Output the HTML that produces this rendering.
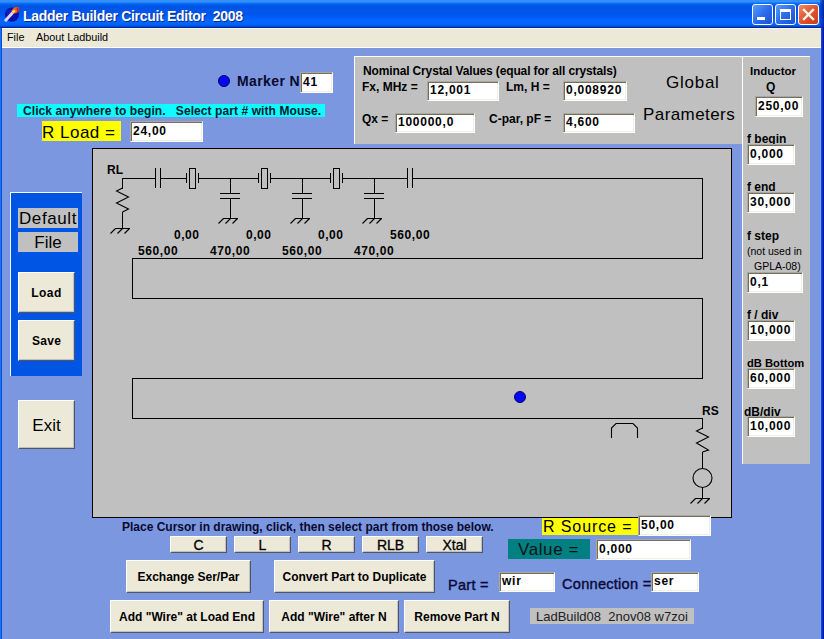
<!DOCTYPE html>
<html><head><meta charset="utf-8">
<style>
html,body{margin:0;padding:0;}
body{width:824px;height:639px;overflow:hidden;position:relative;background:#7B97DF;font-family:"Liberation Sans",sans-serif;}
div,span{position:absolute;box-sizing:border-box;white-space:nowrap;}
.t{line-height:1;}
.b{font-weight:bold;}
#title{left:0;top:0;width:824px;height:28px;background:linear-gradient(to bottom,#3A8CF8 0px,#3A8CF8 1px,#3593FF 1px,#3593FF 2px,#1A80FF 2px,#1A80FF 3px,#0870FA 3px,#0870FA 4px,#0262EE 4px,#0262EE 5px,#0058E6 5px,#0058E6 6px,#0054E3 6px,#0054E3 7px,#0054E3 7px,#0054E3 8px,#0055E8 8px,#0055E8 9px,#0055EA 9px,#0055EA 10px,#0055EB 10px,#0055EB 11px,#0055EB 11px,#0055EB 12px,#0055EB 12px,#0055EB 13px,#0056EC 13px,#0056EC 14px,#0057EE 14px,#0057EE 15px,#0058F0 15px,#0058F0 16px,#005AF3 16px,#005AF3 17px,#005DF6 17px,#005DF6 18px,#0060F9 18px,#0060F9 19px,#0064FB 19px,#0064FB 20px,#0066FD 20px,#0066FD 21px,#0067FE 21px,#0067FE 22px,#0066FD 22px,#0066FD 23px,#0064FA 23px,#0064FA 24px,#0062F6 24px,#0062F6 25px,#005CEE 25px,#005CEE 26px,#0048D0 26px,#0048D0 27px,#002A9A 27px,#002A9A 28px);}
#menu{left:2px;top:28px;width:819px;height:20px;background:#ECE9D8;border-top:1px solid #F4F4FF;border-bottom:1px solid #FFFFFF;}
#lb{left:0;top:28px;width:2px;height:611px;background:linear-gradient(to right,#1672FA 0px,#1672FA 1px,#0A50D0 1px,#0A50D0 2px);}
#rb{left:820px;top:28px;width:4px;height:611px;background:linear-gradient(to right,#76A0F8 0px,#76A0F8 1px,#1A40D0 1px,#1A40D0 2px,#0C30C0 2px,#0C30C0 3px,#0016B0 3px,#0016B0 4px);}
.tb{background:#fff;border-style:solid;border-width:1px;border-color:#ACA899 #FFFFFF #FFFFFF #ACA899;box-shadow:inset 1px 1px 0 #716F64,inset -1px -1px 0 #F1EFE2;font:bold 12px/12px "Liberation Sans",sans-serif;color:#000;padding:3px 0 0 2px;letter-spacing:0.75px;}
.btn{background:#ECE9D8;border-style:solid;border-width:1px;border-color:#FFFFFF #4E5566 #4E5566 #FFFFFF;box-shadow:inset -1px -1px 0 rgba(120,120,130,0.35);font:bold 12px/12px "Liberation Sans",sans-serif;color:#000;text-align:center;}
.btn span{position:static;}
.gp{background:#C0C0C0;border-left:1px solid #fff;border-top:1px solid #fff;}
</style></head><body>
<div id="title"></div>
<div style="left:820px;top:0;width:4px;height:28px;background:linear-gradient(to right,rgba(0,60,210,0.5),rgba(0,30,150,0.9));"></div>
<div id="lb"></div><div id="rb"></div>
<div id="menu"></div>

<!-- title icon -->
<svg style="position:absolute;left:0;top:0" width="24" height="28">
<ellipse cx="12" cy="14.6" rx="7" ry="7.2" fill="#0A10A8"/>
<ellipse cx="10" cy="13" rx="3.5" ry="3.5" fill="#1830D0" opacity="0.5"/>
<path d="M5.8 20.2 L12.6 12.8" stroke="#E0D8F0" stroke-width="2.8" stroke-linecap="round"/>
<path d="M11.5 11 Q13 7.5 16 7 Q18.5 6.6 19 8 Q19.3 11 17 12.8 Q14.5 14 12.5 13 Z" fill="#F06018"/>
<path d="M16.5 7.3 Q18.8 7.2 18.8 9 Q18.6 11.2 17.2 12 Z" fill="#E01808"/>
<path d="M11.8 11.5 Q13.5 9.5 15.5 10.5 Q15.5 12.5 13.3 13 Z" fill="#F8F070"/>
</svg>
<div class="t b" style="left:23px;top:9px;font-size:14px;letter-spacing:-0.3px;color:#fff;text-shadow:1px 1px 0 #0A2A90;">Ladder Builder Circuit Editor&nbsp; 2008</div>
<!-- window buttons -->
<div style="left:752px;top:4px;width:21px;height:21px;border:1px solid #fff;border-radius:3px;background:linear-gradient(135deg,#5A9CFF 0%,#2C6CEB 50%,#1E50D0 100%);"></div>
<div style="left:757px;top:17px;width:8px;height:3px;background:#fff;"></div>
<div style="left:775px;top:4px;width:21px;height:21px;border:1px solid #fff;border-radius:3px;background:linear-gradient(135deg,#5A9CFF 0%,#2C6CEB 50%,#1E50D0 100%);"></div>
<div style="left:780px;top:9px;width:11px;height:11px;border:1px solid #fff;border-top-width:3px;"></div>
<div style="left:798px;top:4px;width:21px;height:21px;border:1px solid #fff;border-radius:3px;background:linear-gradient(135deg,#F08C68 0%,#E0522E 50%,#C83C18 100%);"></div>
<svg style="position:absolute;left:798px;top:4px" width="21" height="21"><path d="M6 6 L15 15 M15 6 L6 15" stroke="#FFF4E8" stroke-width="2.4" stroke-linecap="square"/></svg>
<!-- menu text -->
<div class="t" style="left:7px;top:32px;font-size:10.8px;color:#000;">File</div>
<div class="t" style="left:36px;top:32px;font-size:10.8px;color:#000;">About Ladbuild</div>

<!-- marker -->
<div style="left:218px;top:75px;width:12px;height:12px;border-radius:6px;background:#0808F0;border:1px solid #000070;"></div>
<div class="t b" style="left:237px;top:74px;font-size:14px;letter-spacing:0.4px;color:#0A0A30;">Marker N</div>
<div class="tb" style="left:300px;top:72px;width:33px;height:21px;">41</div>

<div class="t b" style="left:17px;top:104px;width:308px;height:13px;background:#10FAFF;color:#002030;font-size:12px;letter-spacing:0.08px;padding:1px 0 0 6px;">Click anywhere to begin.&nbsp;&nbsp; Select part # with Mouse.</div>
<div class="t" style="left:42px;top:121px;width:79px;height:20px;background:#FFFF00;color:#000;font-size:17px;letter-spacing:0.5px;padding:3px 0 0 0;">R Load =</div>
<div class="tb" style="left:130px;top:121px;width:73px;height:21px;">24,00</div>

<!-- panel 1 -->
<div class="gp" style="left:354px;top:56px;width:388px;height:88px;"></div>
<div class="t b" style="left:363px;top:65px;font-size:12px;letter-spacing:-0.14px;color:#000;">Nominal Crystal Values (equal for all crystals)</div>
<div class="t b" style="left:362px;top:81px;font-size:12px;color:#000;">Fx, MHz =</div>
<div class="tb" style="left:427px;top:81px;width:72px;height:20px;padding-top:2px;">12,001</div>
<div class="t b" style="left:506px;top:81px;font-size:12px;color:#000;">Lm, H =</div>
<div class="tb" style="left:563px;top:81px;width:64px;height:20px;padding-top:2px;">0,008920</div>
<div class="t b" style="left:362px;top:113px;font-size:12px;color:#000;">Qx =</div>
<div class="tb" style="left:395px;top:113px;width:80px;height:20px;padding-top:2px;">100000,0</div>
<div class="t b" style="left:489px;top:113px;font-size:12px;color:#000;">C-par, pF =</div>
<div class="tb" style="left:563px;top:113px;width:72px;height:20px;padding-top:2px;">4,600</div>
<div class="t" style="left:666px;top:74px;font-size:17px;letter-spacing:0.75px;color:#000;">Global</div>
<div class="t" style="left:643px;top:106px;font-size:17px;letter-spacing:0.42px;color:#000;">Parameters</div>

<!-- panel 2 -->
<div class="gp" style="left:742px;top:56px;width:68px;height:408px;"></div>
<div class="t b" style="left:750px;top:66px;font-size:11.5px;color:#000;">Inductor</div>
<div class="t b" style="left:766px;top:81px;font-size:12px;color:#000;">Q</div>
<div class="tb" style="left:755px;top:96px;width:48px;height:21px;">250,00</div>
<div class="t b" style="left:747px;top:133px;font-size:12px;color:#000;">f begin</div>
<div class="tb" style="left:747px;top:144px;width:48px;height:21px;">0,000</div>
<div class="t b" style="left:747px;top:181px;font-size:12px;color:#000;">f end</div>
<div class="tb" style="left:747px;top:192px;width:48px;height:21px;">30,000</div>
<div class="t b" style="left:747px;top:230px;font-size:12px;color:#000;">f step</div>
<div class="t" style="left:747px;top:246px;font-size:10.5px;color:#000;">(not used in</div>
<div class="t" style="left:754px;top:261px;font-size:10.5px;color:#000;">GPLA-08)</div>
<div class="tb" style="left:747px;top:272px;width:56px;height:21px;">0,1</div>
<div class="t b" style="left:747px;top:309px;font-size:12px;color:#000;">f / div</div>
<div class="tb" style="left:747px;top:320px;width:48px;height:21px;">10,000</div>
<div class="t b" style="left:747px;top:358px;font-size:11.2px;color:#000;">dB Bottom</div>
<div class="tb" style="left:747px;top:368px;width:48px;height:21px;">60,000</div>
<div class="t b" style="left:744px;top:406px;font-size:12px;color:#000;">dB/div</div>
<div class="tb" style="left:747px;top:416px;width:48px;height:21px;">10,000</div>

<!-- left -->
<div style="left:10px;top:192px;width:72px;height:184px;background:#0055E5;border-left:1px solid #F0FAFF;border-top:1px solid #F0FAFF;"></div>
<div class="t" style="left:18px;top:208px;width:60px;height:20px;background:#C0C0C0;font-size:17px;letter-spacing:0.6px;text-align:center;padding-top:2px;color:#000;">Default</div>
<div class="t" style="left:18px;top:232px;width:60px;height:20px;background:#C0C0C0;font-size:17px;text-align:center;padding-top:2px;color:#000;">File</div>
<div class="btn" style="left:18px;top:272px;width:57px;height:41px;padding-top:14px;letter-spacing:0.5px;">Load</div>
<div class="btn" style="left:18px;top:320px;width:57px;height:41px;padding-top:14px;letter-spacing:0.3px;">Save</div>
<div class="btn" style="left:18px;top:400px;width:57px;height:49px;padding-top:16px;font:normal 17px/17px 'Liberation Sans',sans-serif;">Exit</div>

<!-- drawing panel -->
<div style="left:92px;top:148px;width:640px;height:370px;background:#C0C0C0;border:1px solid #000;"></div>

<svg style="position:absolute;left:0;top:0" width="824" height="639">
<path d="M122 178.5H156M160 178.5H187M198 178.5H259M270 178.5H331M342 178.5H408M412 178.5H703M155.5 168V188M160.5 168V188M407.5 168V188M412.5 168V188M186.5 173V183M198.5 173V183M258.5 173V183M270.5 173V183M330.5 173V183M342.5 173V183M230.5 178V194M220 193.5H240M220 198.5H240M230.5 198V219M223 218.5H238M302.5 178V194M292 193.5H312M292 198.5H312M302.5 198V219M295 218.5H310M374.5 178V194M364 193.5H384M364 198.5H384M374.5 198V219M367 218.5H382M122.5 178V189M122.5 212V229M115 228.5H130M702.5 178V259M132 258.5H703M132.5 258V299M132 298.5H703M702.5 298V379M132 378.5H703M132.5 378V419M132 418.5H703M702.5 418V429M702.5 452V469M702.5 487V499M695 498.5H710" stroke="#000" stroke-width="1" fill="none" shape-rendering="crispEdges"/>
<g shape-rendering="crispEdges"><rect x="189.5" y="168.5" width="6" height="20" fill="none" stroke="#000"/><rect x="261.5" y="168.5" width="6" height="20" fill="none" stroke="#000"/><rect x="333.5" y="168.5" width="6" height="20" fill="none" stroke="#000"/></g>
<path d="M223.5 218.5L218.5 223.5M230.5 218.5L225.5 223.5M237.5 218.5L232.5 223.5M295.5 218.5L290.5 223.5M302.5 218.5L297.5 223.5M309.5 218.5L304.5 223.5M367.5 218.5L362.5 223.5M374.5 218.5L369.5 223.5M381.5 218.5L376.5 223.5M122.5 188L116.5 191L128.5 197L116.5 203L128.5 209L122.5 212M115.5 228.5L110.5 233.5M122.5 228.5L117.5 233.5M129.5 228.5L124.5 233.5M702.5 428L696.5 431L708.5 437L696.5 443L708.5 450L702.5 452M695.5 498.5L690.5 503.5M702.5 498.5L697.5 503.5M709.5 498.5L704.5 503.5M611.5 438V428L616 423.5H633L637.5 428V438" stroke="#000" stroke-width="1.1" fill="none"/>
<circle cx="702.5" cy="478" r="9.5" stroke="#000" stroke-width="1.1" fill="none"/>
</svg>
<div style="left:514px;top:391px;width:12px;height:12px;border-radius:6px;background:#0808F0;border:1px solid #000070;"></div>

<div class="t b" style="left:107px;top:164px;font-size:12px;color:#000;">RL</div>
<div class="t b" style="left:174px;top:229px;font-size:12px;letter-spacing:0.5px;color:#000;">0,00</div>
<div class="t b" style="left:246px;top:229px;font-size:12px;letter-spacing:0.5px;color:#000;">0,00</div>
<div class="t b" style="left:318px;top:229px;font-size:12px;letter-spacing:0.5px;color:#000;">0,00</div>
<div class="t b" style="left:390px;top:229px;font-size:12px;letter-spacing:0.6px;color:#000;">560,00</div>
<div class="t b" style="left:138px;top:245px;font-size:12px;letter-spacing:0.6px;color:#000;">560,00</div>
<div class="t b" style="left:210px;top:245px;font-size:12px;letter-spacing:0.6px;color:#000;">470,00</div>
<div class="t b" style="left:282px;top:245px;font-size:12px;letter-spacing:0.6px;color:#000;">560,00</div>
<div class="t b" style="left:354px;top:245px;font-size:12px;letter-spacing:0.6px;color:#000;">470,00</div>
<div class="t b" style="left:702px;top:405px;font-size:12px;color:#000;">RS</div>

<div class="t b" style="left:122px;top:521px;font-size:12px;color:#0A0A30;">Place Cursor in drawing, click, then select part from those below.</div>
<div class="t" style="left:542px;top:518px;width:96px;height:17px;background:#FFFF00;color:#000;font-size:16px;letter-spacing:0.9px;padding:1px 0 0 1px;">R Source =</div>
<div class="tb" style="left:638px;top:515px;width:73px;height:21px;">50,00</div>
<div class="t" style="left:508px;top:539px;width:82px;height:20px;background:#008080;color:#0A1418;font-size:17px;letter-spacing:0.6px;padding:2px 0 0 10px;">Value =</div>
<div class="tb" style="left:596px;top:539px;width:95px;height:21px;">0,000</div>
<div class="btn" style="left:170px;top:536px;width:57px;height:17px;padding-top:1px;font:normal 14px/14px 'Liberation Sans',sans-serif;-webkit-text-stroke:0.3px #000;">C</div>
<div class="btn" style="left:234px;top:536px;width:57px;height:17px;padding-top:1px;font:normal 14px/14px 'Liberation Sans',sans-serif;-webkit-text-stroke:0.3px #000;">L</div>
<div class="btn" style="left:298px;top:536px;width:57px;height:17px;padding-top:1px;font:normal 14px/14px 'Liberation Sans',sans-serif;-webkit-text-stroke:0.3px #000;">R</div>
<div class="btn" style="left:362px;top:536px;width:57px;height:17px;padding-top:1px;font:normal 14px/14px 'Liberation Sans',sans-serif;-webkit-text-stroke:0.3px #000;">RLB</div>
<div class="btn" style="left:426px;top:536px;width:57px;height:17px;padding-top:1px;font:normal 14px/14px 'Liberation Sans',sans-serif;-webkit-text-stroke:0.3px #000;">Xtal</div>
<div class="btn" style="left:126px;top:560px;width:125px;height:33px;padding-top:10px;">Exchange Ser/Par</div>
<div class="btn" style="left:274px;top:560px;width:161px;height:33px;padding-top:10px;">Convert Part to Duplicate</div>
<div class="btn" style="left:110px;top:600px;width:154px;height:33px;padding-top:10px;">Add "Wire" at Load End</div>
<div class="btn" style="left:269px;top:600px;width:130px;height:33px;padding-top:10px;">Add "Wire" after N</div>
<div class="btn" style="left:404px;top:600px;width:106px;height:33px;padding-top:10px;">Remove Part N</div>
<div class="t" style="left:448px;top:578px;font-size:14.5px;letter-spacing:0.3px;color:#0A0A38;-webkit-text-stroke:0.4px #0A0A38;">Part =</div>
<div class="tb" style="left:499px;top:572px;width:56px;height:20px;padding-top:2px;">wir</div>
<div class="t" style="left:562px;top:577px;font-size:14.6px;letter-spacing:0.25px;color:#0A0A38;-webkit-text-stroke:0.4px #0A0A38;">Connection =</div>
<div class="tb" style="left:651px;top:572px;width:48px;height:20px;padding-top:2px;">ser</div>
<div class="t" style="left:530px;top:608px;width:164px;height:16px;background:#C0C0C0;color:#202020;font-size:13px;padding:2px 0 0 6px;">LadBuild08&nbsp; 2nov08 w7zoi</div>

</body></html>
